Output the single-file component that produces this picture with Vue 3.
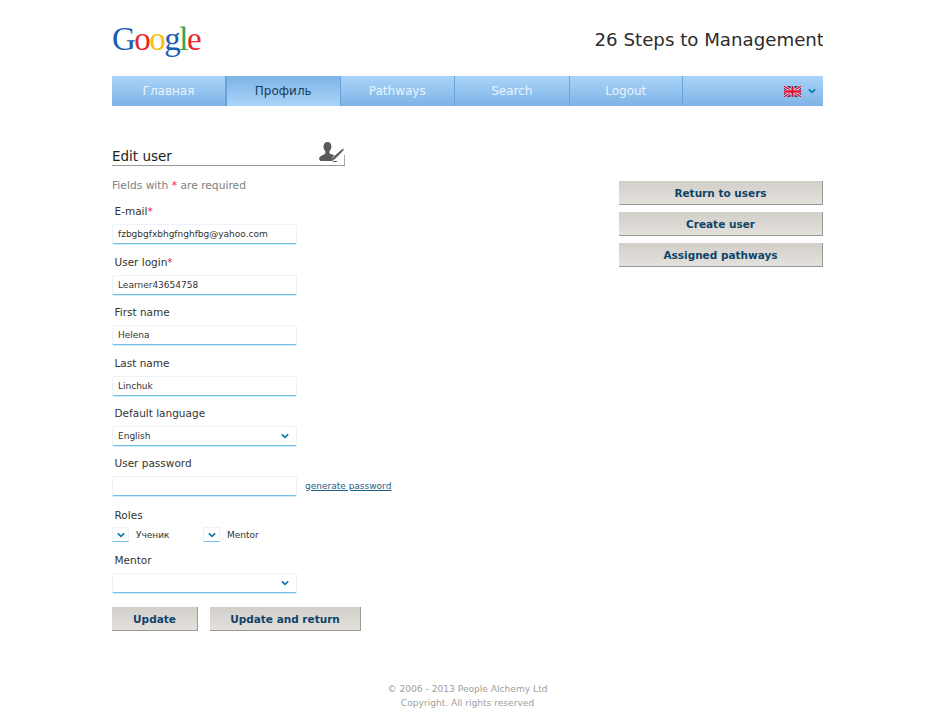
<template>
  <div class="page">
    <header class="top">
      <div class="logo">
        <span class="blue">G</span><span class="red">o</span><span class="yellow">o</span><span class="blue">g</span><span class="green">l</span><span class="red">e</span>
      </div>
      <div class="site-title">26 Steps to Management</div>
    </header>

    <nav class="nav">
      <a v-for="item in navItems" :key="item" class="nav-item" :class="{ active: item === 'Профиль' }">{{ item }}</a>
      <div class="lang">
        <svg class="flag" viewBox="0 0 60 38" width="17" height="11">
          <rect width="60" height="38" fill="#2a2f78" />
          <path d="M0 0L60 38M60 0L0 38" stroke="#fff" stroke-width="9" />
          <path d="M0 0L60 38M60 0L0 38" stroke="#e01030" stroke-width="5" />
          <path d="M30 0V38M0 19H60" stroke="#fff" stroke-width="13" />
          <path d="M30 0V38M0 19H60" stroke="#e01030" stroke-width="8" />
        </svg>
        <svg class="chev" viewBox="0 0 10 7" width="8" height="6"><path d="M1 1.500L5 5.200L9 1.500" /></svg>
      </div>
    </nav>

    <main class="content">
      <section class="form-col">
        <div class="heading">
          <h1>Edit user</h1>
          <svg class="user-icon" viewBox="0 0 25 21" width="25" height="21">
            <path fill="#5a5a5a" d="M8.500 0c2.500 0 3.900 1.900 3.900 4.500 0 2-.8 3.700-1.900 4.700v2.300c1.900.7 3.900 1.300 5.500 2.300l-3 5.200H1.500L0 17c0-1.500 1.200-2.600 2.500-3.300 1.200-.6 2.700-1.200 3.800-1.900V9.200C5.200 8.200 4.500 6.500 4.500 4.500 4.500 1.900 6 0 8.500 0z" />
            <path fill="none" stroke="#fff" stroke-width="2.500" d="M23.500 8L14 16.500" />
            <path fill="#5a5a5a" d="M24 6.500l.8 1.400-8.300 8.600-3.900 2.800 1.700-4.400z" />
            <path fill="none" stroke="#5a5a5a" stroke-width="1" d="M14 19.500h4" />
          </svg>
        </div>
        <p class="hint">Fields with <span class="req">*</span> are required</p>

        <div class="field">
          <label>E-mail<span class="req">*</span></label>
          <div class="input">fzbgbgfxbhgfnghfbg@yahoo.com</div>
        </div>
        <div class="field">
          <label>User login<span class="req">*</span></label>
          <div class="input">Learner43654758</div>
        </div>
        <div class="field">
          <label>First name</label>
          <div class="input">Helena</div>
        </div>
        <div class="field">
          <label>Last name</label>
          <div class="input">Linchuk</div>
        </div>
        <div class="field">
          <label>Default language</label>
          <div class="input select">
            English
            <svg class="chev" viewBox="0 0 10 7" width="8" height="6"><path d="M1 1.500L5 5.200L9 1.500" /></svg>
          </div>
        </div>
        <div class="field password">
          <label>User password</label>
          <div class="pass-row">
            <div class="input"></div>
            <a class="gen">generate password</a>
          </div>
        </div>
        <div class="field roles">
          <label>Roles</label>
          <div class="role-row">
            <div class="role">
              <span class="check"><svg class="chev" viewBox="0 0 10 7" width="8" height="6"><path d="M1 1.500L5 5.200L9 1.500" /></svg></span>
              Ученик
            </div>
            <div class="role">
              <span class="check"><svg class="chev" viewBox="0 0 10 7" width="8" height="6"><path d="M1 1.500L5 5.200L9 1.500" /></svg></span>
              Mentor
            </div>
          </div>
        </div>
        <div class="field">
          <label>Mentor</label>
          <div class="input select">
            <svg class="chev" viewBox="0 0 10 7" width="8" height="6"><path d="M1 1.500L5 5.200L9 1.500" /></svg>
          </div>
        </div>

        <div class="actions">
          <button class="btn update">Update</button>
          <button class="btn update-return">Update and return</button>
        </div>
      </section>

      <aside class="side">
        <button v-for="b in sideButtons" :key="b" class="btn side-btn">{{ b }}</button>
      </aside>
    </main>

    <footer class="footer">
      <div>© 2006 - 2013 People Alchemy Ltd</div>
      <div>Copyright. All rights reserved</div>
    </footer>
  </div>
</template>

<script setup>
const navItems = ['Главная', 'Профиль', 'Pathways', 'Search', 'Logout']
const sideButtons = ['Return to users', 'Create user', 'Assigned pathways']
</script>

<style>
html,
body {
  margin: 0;
  background: #fff;
}
</style>

<style scoped>
.page {
  width: 711px;
  height: 717px;
  margin-left: 112px;
  font-family: 'DejaVu Sans', Verdana, sans-serif;
  color: #333;
  overflow: hidden;
}

.top {
  display: flex;
  justify-content: space-between;
  height: 76px;
}

.logo {
  font-family: 'Liberation Serif', serif;
  font-size: 33px;
  line-height: 40px;
  letter-spacing: -1.500px;
  padding-top: 19px;
}
.blue { color: #1a5fb4; }
.red { color: #e8262a; }
.yellow { color: #f4c20d; }
.green { color: #2fa84f; }

.site-title {
  font-size: 18.200px;
  line-height: 24px;
  padding-top: 28px;
  margin-right: -1px;
  color: #2c2c2c;
}

.nav {
  display: flex;
  height: 30px;
  background: linear-gradient(#aad4f9, #7eb3e6);
  font-size: 12px;
  line-height: 31px;
}

.nav-item {
  width: 114.500px;
  flex: none;
  text-align: center;
  color: #e8f3fd;
  border-right: 1px solid #6ba3d9;
  box-sizing: border-box;
}

.nav-item:first-child {
  width: 114px;
}

.nav-item:nth-child(5) {
  width: 113.500px;
}

.nav-item.active {
  background: linear-gradient(#7eb3e6, #aad4f9);
  color: #1c3d5e;
  border-left: 1px solid #6ba3d9;
}

.lang {
  flex: 1;
  display: flex;
  align-items: center;
  justify-content: flex-end;
  gap: 7px;
  padding-right: 7px;
}

.chev {
  display: block;
  fill: none;
  stroke: #0a76a8;
  stroke-width: 2;
}

.content {
  display: flex;
  justify-content: space-between;
}

.form-col {
  width: 280px;
}

.heading {
  position: relative;
  width: 233px;
  height: 24px;
  margin-top: 35px;
  border-bottom: 1px solid #999;
}

.heading::after {
  content: '';
  position: absolute;
  right: 0;
  bottom: 0;
  width: 1px;
  height: 10px;
  background: #aaa;
}

.heading h1 {
  margin: 0;
  font-size: 13.500px;
  font-weight: 400;
  line-height: 30px;
  color: #222;
}

.user-icon {
  position: absolute;
  right: 1px;
  top: 1px;
}

.hint {
  margin: 12px 0 0;
  font-size: 10.700px;
  line-height: 16px;
  color: #808080;
}

.req {
  color: #e8262a;
}

.field {
  height: 50.500px;
}

.field label {
  display: block;
  padding-left: 2.500px;
  font-size: 10.500px;
  line-height: 14px;
  height: 20px;
  color: #333;
}

.hint + .field {
  margin-top: 10px;
}

.password {
  margin-top: -0.500px;
}

.input {
  display: flex;
  align-items: center;
  justify-content: space-between;
  box-sizing: border-box;
  width: 185px;
  height: 20px;
  padding: 0 7px 0 5px;
  background: #fff;
  border: 1px solid #edf3f8;
  border-bottom: 1px solid #6fc0e6;
  box-shadow: 0 1px 0 #d4ecf7;
  border-radius: 2px;
  font-size: 9px;
  color: #333;
}

.select {
  justify-content: space-between;
}
.select .chev:only-child {
  margin-left: auto;
}

.pass-row {
  display: flex;
  align-items: center;
  gap: 8px;
}

.gen {
  font-size: 9px;
  line-height: 12px;
  margin-top: -1px;
  color: #1e5f8a;
  text-decoration: underline;
}

.roles {
  height: 45px;
  margin-top: 1.500px;
}

.role-row {
  display: flex;
  margin-top: -1px;
}

.role {
  display: flex;
  align-items: center;
  gap: 7px;
  width: 91px;
  font-size: 9px;
  color: #333;
}

.check {
  display: flex;
  align-items: center;
  justify-content: center;
  box-sizing: border-box;
  width: 17px;
  height: 15px;
  border: 1px solid #edf3f8;
  border-bottom: 1px solid #6fc0e6;
}

.actions {
  display: flex;
  gap: 12px;
  margin-top: 3.500px;
}

.btn {
  display: block;
  box-sizing: border-box;
  height: 24px;
  padding: 1px 0 0;
  border: 0;
  border-right: 1px solid #999;
  border-bottom: 1px solid #999;
  background: linear-gradient(#d2cfcb, #e4e1dd);
  font-family: 'DejaVu Sans', Verdana, sans-serif;
  font-size: 10.500px;
  font-weight: 700;
  color: #0e4468;
}

.update {
  width: 86px;
}

.update-return {
  width: 151px;
}

.side {
  display: flex;
  flex-direction: column;
  gap: 7px;
  width: 204px;
  padding-top: 75px;
}

.side-btn {
  width: 204px;
}

.footer {
  position: absolute;
  top: 682px;
  left: 0;
  width: 935px;
  text-align: center;
  font-size: 9.100px;
  line-height: 14px;
  color: #a0a0a0;
}
</style>
